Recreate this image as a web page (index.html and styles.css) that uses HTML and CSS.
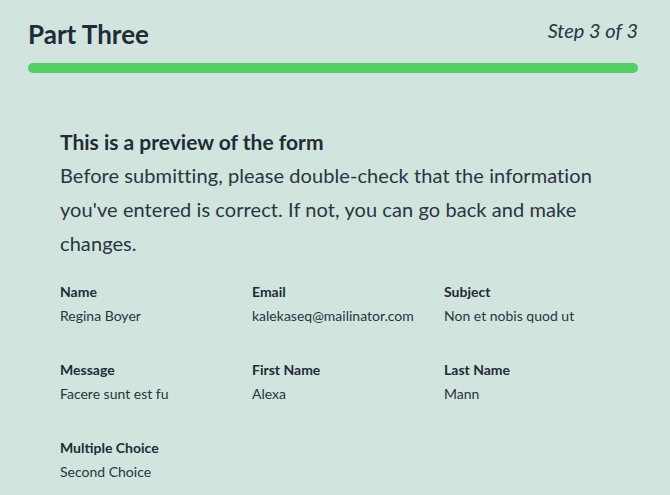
FILE: index.html
```html
<!DOCTYPE html>
<html lang="en">
<head>
    <meta charset="UTF-8">
    <meta name="viewport" content="width=device-width, initial-scale=1.0">
    <title>Part Three</title>
    <link rel="stylesheet" href="styles.css">
</head>
<body>
    <header class="step-header">
        <h1>Part Three</h1>
        <div class="step-count">Step 3 of 3</div>
    </header>
    <div class="progress"><div class="progress-bar" style="width: 100%"></div></div>

    <section class="preview">
        <h2>This is a preview of the form</h2>
        <p class="intro">Before submitting, please double-check that the information you've entered is correct. If not, you can go back and make changes.</p>
        <div class="fields">
            <div class="field">
                <div class="label">Name</div>
                <div class="value">Regina Boyer</div>
            </div>
            <div class="field">
                <div class="label">Email</div>
                <div class="value">kalekaseq@mailinator.com</div>
            </div>
            <div class="field">
                <div class="label">Subject</div>
                <div class="value">Non et nobis quod ut</div>
            </div>
            <div class="field">
                <div class="label">Message</div>
                <div class="value">Facere sunt est fu</div>
            </div>
            <div class="field">
                <div class="label">First Name</div>
                <div class="value">Alexa</div>
            </div>
            <div class="field">
                <div class="label">Last Name</div>
                <div class="value">Mann</div>
            </div>
            <div class="field">
                <div class="label">Multiple Choice</div>
                <div class="value">Second Choice</div>
            </div>
        </div>
    </section>
</body>
</html>
```

FILE: styles.css
```css
body{
    font-family: 'Lato', 'Open Sans', sans-serif;
    color: #232b36;
    background-color: #d1e4de;
    margin: 0;
    padding: 18px 32px 0 28px;
}

.step-header{
    display: flex;
    justify-content: space-between;
    align-items: flex-start;
}

.step-header h1{
    font-size: 26px;
    font-weight: 700;
    margin: 0;
    padding-top: 1px;
    line-height: 30px;
}

.step-count{
    font-style: italic;
    font-size: 20px;
    line-height: 24px;
    color: #2b3440;
}

.progress{
    margin-top: 14px;
    height: 10px;
    border-radius: 5px;
    background-color: #c4d8d2;
}

.progress-bar{
    height: 100%;
    border-radius: 5px;
    background-color: #51cf66;
}

.preview{
    margin: 30px 16px 0 16px;
    padding: 26px 15px 20px;
    border: 1px solid #dde3e1;
    border-bottom: none;
}

.preview h2{
    font-size: 21px;
    font-weight: 700;
    margin: 0;
    line-height: 24px;
}

.intro{
    font-size: 20px;
    line-height: 34px;
    margin: 4px 0 20px;
    color: #2b3440;
    letter-spacing: 0.08px;
}

.fields{
    display: grid;
    grid-template-columns: repeat(3, 192px);
    row-gap: 30px;
}

.label{
    font-size: 14px;
    font-weight: 700;
    line-height: 24px;
}

.value{
    font-size: 14px;
    line-height: 24px;
    color: #2b3440;
}
```
